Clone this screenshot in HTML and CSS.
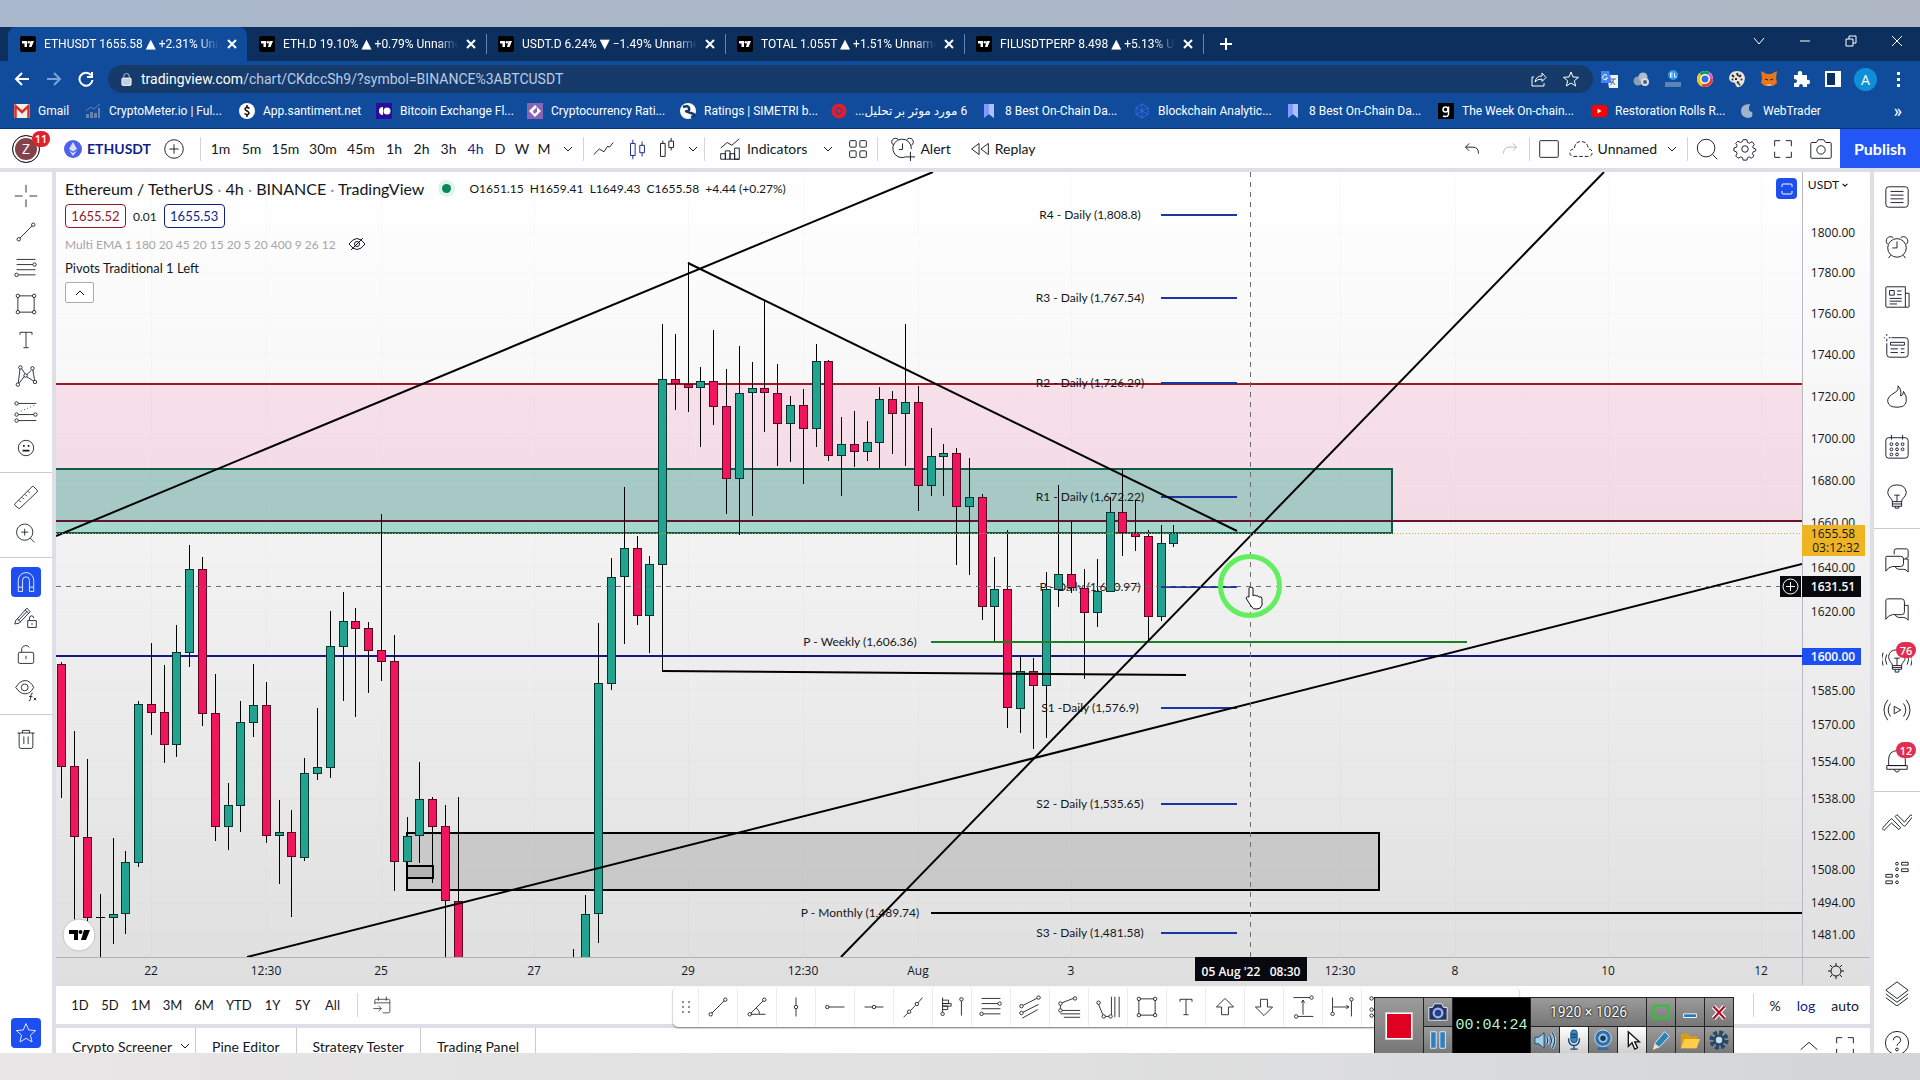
FILE: index.html
```html
<!DOCTYPE html>
<html lang="en">
<head>
    <meta charset="UTF-8">
    <meta name="viewport" content="width=device-width, initial-scale=1.0">
    <title>ETHUSDT 1655.58 ▲ +2.31% Unnamed</title>
    <link rel="stylesheet" href="styles.css">
</head>
<body>
    <svg class="defs" aria-hidden="true">
        <symbol id="tv" viewBox="0 0 16 16"><rect width="16" height="16" rx="2" fill="#000"/><path d="M2 5h5v6H4.500V7.500H2zM10.500 5H14l-2.500 6H9z" fill="#fff"/><circle cx="8.800" cy="6.200" r="1.200" fill="#fff"/></symbol>
        <symbol id="x" viewBox="0 0 10 10"><path d="M1 1l8 8M9 1L1 9"/></symbol>
        <symbol id="chev" viewBox="0 0 10 10"><path d="M1 3l4 4 4-4"/></symbol>
        <symbol id="chevup" viewBox="0 0 10 10"><path d="M1 7l4-4 4 4"/></symbol>
        <symbol id="plus" viewBox="0 0 28 28"><circle cx="14" cy="14" r="10"/><path d="M14 9v10M9 14h10"/></symbol>
        <symbol id="cross" viewBox="0 0 28 28"><path d="M14 1v9M14 18v9M1 14h9M18 14h9"/></symbol>
        <symbol id="trend" viewBox="0 0 28 28"><path d="M7 21L21 7"/><circle cx="5.500" cy="22.500" r="2"/><circle cx="22.500" cy="5.500" r="2"/></symbol>
        <symbol id="fib" viewBox="0 0 28 28"><path d="M3 4h22M3 10h19M3 16h22M5 22h20"/><circle cx="24" cy="10" r="2"/><circle cx="3" cy="22" r="2"/></symbol>
        <symbol id="rect" viewBox="0 0 28 28"><path d="M6 4.500h16M6 23.500h16M4.500 6v16M23.500 6v16"/><circle cx="4.500" cy="4.500" r="2"/><circle cx="23.500" cy="4.500" r="2"/><circle cx="4.500" cy="23.500" r="2"/><circle cx="23.500" cy="23.500" r="2"/></symbol>
        <symbol id="tee" viewBox="0 0 28 28"><path d="M7 8V5h14v3M14 5v18M11 23h6"/></symbol>
        <symbol id="pattern" viewBox="0 0 28 28"><path d="M5 22L7 6M9 5.500l4 6M15 12.500l5-5M22 7l2 12M6 22.500l6-8M15 15l8 5"/><circle cx="7.500" cy="4" r="2"/><circle cx="21.500" cy="5" r="2"/><circle cx="13.500" cy="13.500" r="2"/><circle cx="4.500" cy="24" r="2"/><circle cx="24.500" cy="21" r="2"/></symbol>
        <symbol id="predict" viewBox="0 0 28 28"><path d="M5 4h21M5 17h18M5 24h21"/><path d="M8 13L24 6" stroke-dasharray="1 3"/><circle cx="3" cy="4" r="2"/><circle cx="3" cy="17" r="2"/><circle cx="25" cy="17" r="2"/><circle cx="3" cy="24" r="2"/></symbol>
        <symbol id="smile" viewBox="0 0 28 28"><circle cx="14" cy="14" r="9"/><path d="M10 17h8M10.500 11.500h2M16 11.500h2" stroke-width="2"/></symbol>
        <symbol id="ruler" viewBox="0 0 28 28"><path d="M1 22L21 2q1-1 2 0l4 4q1 1 0 2L7 27q-1 1-2 0l-4-3.500q-.7-.8 0-1.500zM6 18l2 2M9.500 14.500l2 2M13 11l2 2M16.500 7.500l2 2"/></symbol>
        <symbol id="zoomin" viewBox="0 0 28 28"><circle cx="12.500" cy="13" r="9.500"/><path d="M12.500 9v8M8.500 13h8M19 20l5 5"/></symbol>
        <symbol id="magnet" viewBox="0 0 28 28"><path d="M5 25V12a9 9 0 0 1 18 0v13h-5V12a4 4 0 0 0-8 0v13zM5 20h5M18 20h5"/></symbol>
        <symbol id="pencillock" viewBox="0 0 28 28"><path d="M2 17L15 2.500l4 4L6 20l-5 1zM4 15l4 4M13 4.500l4 4M5 17L15.500 6M16 17h10v8H16zM18 17v-3a2.500 2.500 0 0 1 5 0M21 20v2"/></symbol>
        <symbol id="lock" viewBox="0 0 28 28"><rect x="5" y="12" width="18" height="13" rx="2"/><path d="M9 12V7.500a5 5 0 0 1 9-1M14 16v4"/></symbol>
        <symbol id="eye" viewBox="0 0 28 28"><path d="M2 11q5-8 11-8t10 8q-4 7.500-10 7.500T2 11z"/><circle cx="12.500" cy="11" r="4"/><path d="M22 18q-2-1-2.200 2l-.6 5q-.3 2-2 1.500M17.500 21.500h4M23 23l3 3M26 23l-3 3"/></symbol>
        <symbol id="trash" viewBox="0 0 28 28"><path d="M4 7h20M10 7V4h8v3M6 7v16q0 2 2 2h12q2 0 2-2V7M11.500 11v9M16.500 11v9"/></symbol>
        <symbol id="star" viewBox="0 0 28 28"><path d="M14 3l3.200 7.500 8 .700-6 5.300 1.800 8-7-4.300-7 4.300 1.800-8-6-5.300 8-.7z"/></symbol>
        <symbol id="line" viewBox="0 0 28 28"><path d="M4 20l6-6 5 3 4-6 2 1 4-5"/></symbol>
        <symbol id="candles" viewBox="0 0 28 28"><path d="M7 8h5v13H7zM9.500 4v4M9.500 21v4M17 10h5v8h-5zM19.500 6v4M19.500 18v4"/></symbol>
        <symbol id="candles2" viewBox="0 0 28 28"><path d="M7 8h5v14H7zM9.500 5v3M16 5.500h5v7h-5zM18.500 2v3.500M18.500 12.500v3"/></symbol>
        <symbol id="indic" viewBox="0 0 28 28"><path d="M4 13l7-6 5 3 8-7M4 25v-6h5v6M9 25v-9h5v9M14 25v-6h5v6M19 25V13h5v12zM4 25h20"/></symbol>
        <symbol id="grid" viewBox="0 0 28 28"><rect x="5" y="5" width="7" height="7" rx="1"/><rect x="16" y="5" width="7" height="7" rx="1"/><rect x="5" y="16" width="7" height="7" rx="1"/><rect x="16" y="16" width="7" height="7" rx="1"/></symbol>
        <symbol id="alarm" viewBox="0 0 28 28"><circle cx="14" cy="15" r="10"/><path d="M14 8v7H9M4 11a4.500 4.500 0 1 1 6-7M24 11a4.500 4.500 0 1 0-6-7M7 23l-2 3M21 23l2 3"/></symbol>
        <symbol id="alarmadd" viewBox="0 0 28 28"><path d="M17 22.500a10 10 0 1 1 6-8.500M13.500 8v6.500H9.500M4 10a4 4 0 1 1 5-6M23 10a4 4 0 1 0-5-6M22 17v10M17 22.500h10"/></symbol>
        <symbol id="replay" viewBox="0 0 28 28"><path d="M13 8v12l-8-6zM23 8v12l-8-6z"/></symbol>
        <symbol id="undo" viewBox="0 0 28 28"><path d="M11 8l-4 4 4 4M7 12h8q6 0 6 7"/></symbol>
        <symbol id="redo" viewBox="0 0 28 28"><path d="M17 8l4 4-4 4M21 12h-8q-6 0-6 7"/></symbol>
        <symbol id="square" viewBox="0 0 28 28"><rect x="4" y="5" width="20" height="18" rx="1"/></symbol>
        <symbol id="cloud" viewBox="0 0 28 28"><path d="M6 22h16q4 0 4-4t-4-4q-1-8-8-8t-7 8q-5 0-5 4t4 4z" stroke-dasharray="4 2"/></symbol>
        <symbol id="search" viewBox="0 0 28 28"><circle cx="13" cy="13" r="9.500"/><path d="M20 20l5 5"/></symbol>
        <symbol id="gear" viewBox="0 0 28 28"><circle cx="14" cy="14" r="3.500"/><path d="M12 4h4l.7 3 2 .8L21.500 6 24 9l-1.700 2.500.5 1.500 2.700 1v2l-2.700 1-.8 2 1.500 2.500-2.500 2.500-2.500-1.500-1.800.8-.7 2.700h-4l-.7-2.700-2-.8L6.500 24 4 21.500 5.500 19l-.8-2-2.700-1v-3l2.700-.8.8-2L4 8l2.500-2.500L9 7l2-.8z"/></symbol>
        <symbol id="full" viewBox="0 0 28 28"><path d="M5 11V5h6M17 5h6v6M23 17v6h-6M11 23H5v-6"/></symbol>
        <symbol id="camera" viewBox="0 0 28 28"><path d="M3 8q0-1 1-1h5l2-3h6l2 3h5q1 0 1 1v15q0 1-1 1H4q-1 0-1-1z"/><circle cx="14" cy="15" r="4.500"/></symbol>
        <symbol id="list" viewBox="0 0 28 28"><rect x="2" y="3" width="24" height="22" rx="3"/><path d="M7 8h14M7 12h14M7 16h14M7 20h14"/></symbol>
        <symbol id="news" viewBox="0 0 28 28"><path d="M2 4q0-1 1-1h20v22H3q-1 0-1-1zM23 10h4v14q0 1-1 1h-3M6 7h5v5H6zM14 7.500h5M14 11.500h5M6 15.500h13M6 18.500h13M6 21.500h8"/></symbol>
        <symbol id="notes" viewBox="0 0 28 28"><path d="M8 4h15q3 0 3 3v15q0 3-3 3H6q-3 0-3-3V10M3-2v4M3 5v3M-3 4h4M5 4h2M7 9h15v3H7zM7 16h8M18 16h4M7 20h8M18 20h4"/></symbol>
        <symbol id="fire" viewBox="0 0 28 28"><path d="M15 2q1 5-3 7-9 5-8 10 1 6 10 6t10-6-3-11q0 4-3 5 1-8-3-11z"/></symbol>
        <symbol id="calendar" viewBox="0 0 28 28"><rect x="2" y="4" width="24" height="22" rx="3"/><path d="M8 1v5M20 1v5"/><circle cx="8" cy="11" r="1.500"/><circle cx="14" cy="11" r="1.500"/><circle cx="20" cy="11" r="1.500"/><circle cx="8" cy="16.500" r="1.500"/><circle cx="14" cy="16.500" r="1.500"/><circle cx="20" cy="16.500" r="1.500"/><circle cx="8" cy="22" r="1.500"/><circle cx="14" cy="22" r="1.500"/></symbol>
        <symbol id="bulb" viewBox="0 0 28 28"><path d="M9 19q0-2-2-4-3-3-3-6 1-8 10-8t10 8q0 3-3 6-2 2-2 4zM9 19v5h10v-5M9 21.500h10M12 24v2h4v-2M11 12h6M14 12v7"/></symbol>
        <symbol id="chats" viewBox="0 0 28 28"><path d="M11 8V4q0-2 2-2h11q2 0 2 2v7q0 1-3 1M3 10h15q3 0 3 3v5q0 3-3 3H9q-5 1-7 5V11q0-1 1-1zM12 21q1 3 4 3h5q3 0 5 3V13h-5"/></symbol>
        <symbol id="chat" viewBox="0 0 28 28"><path d="M4 2h15q3 0 3 3v11q0 3-3 3H9q-5 1-7 5V4q0-2 2-2zM12 19q1 3 4 3h5q3 0 5 3V9h-4"/></symbol>
        <symbol id="cast" viewBox="0 0 32 28"><path d="M13 10v8l7-4zM9 7q-5 7 0 14M6 3q-8 11 0 22M23 7q5 7 0 14M26 3q8 11 0 22"/></symbol>
        <symbol id="ideas" viewBox="0 0 32 28"><path d="M11 20q0-2-2-4-2-2-2-6 1-7 9-7t9 7q0 4-2 6-2 2-2 4zM11 20v4h10v-4M11 22h10M14 24v3h4v-3M13 12h6M16 12v8M5 8q-3 5 0 11M1 6q-3 7 0 14M27 8q3 5 0 11M31 6q3 7 0 14"/></symbol>
        <symbol id="bell" viewBox="0 0 28 28"><path d="M5 20v-6q0-10 9-10t9 10v6zM3 20h22v4H3zM11 24q1 3 3 3t3-3"/></symbol>
        <symbol id="waves" viewBox="0 0 32 28"><path d="M0 20l9-10q1-1 2 0l9 9-2 2-8-7-8 8zM14 7l2-2 8 8 7-8 2 2-8 10q-1 1-2 0z"/></symbol>
        <symbol id="dom" viewBox="0 0 28 28"><circle cx="14" cy="4" r="1.500"/><circle cx="14" cy="10" r="1.500"/><circle cx="14" cy="17" r="1.500"/><circle cx="14" cy="24" r="1.500"/><path d="M19 2.500h7v3h-7zM19 9.500h7v3h-7zM2 15.500h7v3H2zM2 22.500h7v3H2z"/></symbol>
        <symbol id="layers" viewBox="0 0 28 28"><path d="M14 2l12 9-12 9-12-9zM2 15l12 9 12-9M2 19l12 9 12-9"/></symbol>
        <symbol id="help" viewBox="0 0 28 28"><circle cx="14" cy="14" r="12.500"/><path d="M10 11q0-4 4-4t4 4q0 2-2 3t-2 3"/><circle cx="14" cy="21" r="1.500"/></symbol>
        <symbol id="angle" viewBox="0 0 28 28"><path d="M7 21L21 7M7 22.500h17M13 15q4 3 4 7"/><circle cx="5.500" cy="22.500" r="2"/><circle cx="22.500" cy="5.500" r="2"/></symbol>
        <symbol id="vline" viewBox="0 0 28 28"><path d="M14 3v9M14 16v9"/><circle cx="14" cy="14" r="2"/></symbol>
        <symbol id="ray" viewBox="0 0 28 28"><path d="M7 14h18"/><circle cx="5" cy="14" r="2"/></symbol>
        <symbol id="hline" viewBox="0 0 28 28"><path d="M3 14h9M16 14h9"/><circle cx="14" cy="14" r="2"/></symbol>
        <symbol id="ext" viewBox="0 0 28 28"><path d="M3 26l5-5M11 18l6-6M20 9l5-6"/><circle cx="9.500" cy="19.500" r="2"/><circle cx="18.500" cy="10.500" r="2"/></symbol>
        <symbol id="profile" viewBox="0 0 28 28"><path d="M3 3v17M3 6h7v4H3M3 10h10v3H3M3 13h6v4H3M25 7v17"/><circle cx="3" cy="22" r="2"/><circle cx="25" cy="5" r="2"/></symbol>
        <symbol id="channel" viewBox="0 0 28 28"><path d="M6 12L22 4M6 20l18-9M5 27l18-10"/><circle cx="4" cy="13" r="2"/><circle cx="4" cy="21" r="2"/><circle cx="24" cy="3" r="2"/></symbol>
        <symbol id="pitch" viewBox="0 0 28 28"><path d="M6 9l13-5M4 12v4M6 18h21M4 22h23M8 26h19"/><circle cx="4" cy="10" r="2"/><circle cx="4" cy="18" r="2"/><circle cx="21" cy="4" r="2"/></symbol>
        <symbol id="fibtime" viewBox="0 0 28 28"><path d="M3 11l5 12M11 25h4M18 23V2M22 26V2M27 26V2"/><circle cx="3" cy="9" r="2"/><circle cx="9" cy="25" r="2"/><circle cx="17" cy="25" r="2"/></symbol>
        <symbol id="up" viewBox="0 0 28 28"><path d="M14 4l10 10h-6v9h-8v-9H4z"/></symbol>
        <symbol id="down" viewBox="0 0 28 28"><path d="M14 24l10-10h-6V5h-8v9H4z"/></symbol>
        <symbol id="prange" viewBox="0 0 28 28"><path d="M3 3h19M8 25h18M14 23V6M12 9l2-3 2 3"/><circle cx="24" cy="3" r="2"/><circle cx="6" cy="25" r="2"/></symbol>
        <symbol id="drange" viewBox="0 0 28 28"><path d="M3 3v17M25 7v18M4 14h18M19 12l3 2-3 2"/><circle cx="3" cy="22" r="2"/><circle cx="25" cy="5" r="2"/></symbol>
        <symbol id="goto" viewBox="0 0 28 28"><path d="M4 13V8q0-2 2-2h17q2 0 2 2v15q0 2-2 2h-8M4 11h21M9 2v6M20 2v6M2 19h11M9 15l4 4-4 4"/></symbol>
        <symbol id="mark" viewBox="0 0 16 16"><path d="M3 1h10v14l-5-4-5 4z" fill="#7f9bff"/><path d="M8 1h5v14l-5-4z" fill="#b0bfff"/></symbol>
    </svg>

    <div class="browser">
        <div class="tabs">
            <div class="tab active"><svg class="fav"><use href="#tv"/></svg><span>ETHUSDT 1655.58 <b>▲</b> +2.31% Unnamed</span><button aria-label="Close tab"><svg><use href="#x"/></svg></button></div>
            <div class="tab"><svg class="fav"><use href="#tv"/></svg><span>ETH.D 19.10% <b>▲</b> +0.79% Unnamed</span><button aria-label="Close tab"><svg><use href="#x"/></svg></button></div>
            <div class="tab"><svg class="fav"><use href="#tv"/></svg><span>USDT.D 6.24% <b>▼</b> −1.49% Unnamed</span><button aria-label="Close tab"><svg><use href="#x"/></svg></button></div>
            <div class="tab"><svg class="fav"><use href="#tv"/></svg><span>TOTAL 1.055T <b>▲</b> +1.51% Unnamed</span><button aria-label="Close tab"><svg><use href="#x"/></svg></button></div>
            <div class="tab"><svg class="fav"><use href="#tv"/></svg><span>FILUSDTPERP 8.498 <b>▲</b> +5.13% Unnamed</span><button aria-label="Close tab"><svg><use href="#x"/></svg></button></div>
            <button class="new-tab" aria-label="New tab"><svg viewBox="0 0 12 12"><path d="M6 0v12M0 6h12"/></svg></button>
            <div class="window-buttons">
                <button aria-label="Search tabs"><svg viewBox="0 0 12 12"><path d="M1 3l5 6 5-6"/></svg></button>
                <button aria-label="Minimize"><svg viewBox="0 0 12 12"><path d="M1 6h10"/></svg></button>
                <button aria-label="Restore"><svg viewBox="0 0 12 12"><path d="M1 4h7v7H1zM4 4V1h7v7H8"/></svg></button>
                <button aria-label="Close"><svg viewBox="0 0 12 12"><path d="M1 1l10 10M11 1L1 11"/></svg></button>
            </div>
        </div>

        <div class="address-bar">
            <button aria-label="Back"><svg viewBox="0 0 16 16"><path d="M15 8H2M8 2L2 8l6 6"/></svg></button>
            <button class="dim" aria-label="Forward"><svg viewBox="0 0 16 16"><path d="M1 8h13M8 2l6 6-6 6"/></svg></button>
            <button aria-label="Reload"><svg viewBox="0 0 16 16"><path d="M13 4a6.500 6.500 0 1 0 1.500 5M14 1v5H9"/></svg></button>
            <div class="url">
                <svg class="padlock" viewBox="0 0 12 14"><rect x="1" y="6" width="10" height="8" rx="1" fill="#c4d0e2"/><path d="M3 6V4a3 3 0 0 1 6 0v2" stroke="#c4d0e2"/></svg>
                <a href="#chart"><b>tradingview.com</b>/chart/CKdccSh9/?symbol=BINANCE%3ABTCUSDT</a>
                <button aria-label="Share"><svg viewBox="0 0 16 16"><path d="M3 6H1v9h12v-3M4 11q1-6 7-6V2l4 4.500-4 4V8q-5 0-7 3z"/></svg></button>
                <button aria-label="Bookmark"><svg viewBox="0 0 16 16"><path d="M8 1l2 5 5.500.3-4.200 3.500 1.400 5.200L8 12l-4.700 3 1.400-5.200L.5 6.300 6 6z"/></svg></button>
            </div>
            <div class="extensions">
                <svg viewBox="0 0 18 18"><path d="M7 5h11v13H9z" fill="#eef2f8"/><path d="M1 1h8l3 12H1z" fill="#4285f4"/><path d="M7 5.500A2.500 2.500 0 1 0 7.500 8H5.500" stroke="#fff"/><path d="M11 9h5M13.500 9q0 4-3 6M12 11l3 4" stroke="#667"/></svg>
                <svg viewBox="0 0 18 18"><circle cx="6" cy="11" r="4.500" fill="#8f9db0"/><circle cx="11" cy="7" r="4.500" fill="#b3bdca"/><circle cx="13" cy="12" r="4" fill="#d8dde4"/><circle cx="13" cy="12" r="2" fill="#50617a"/></svg>
                <svg viewBox="0 0 18 18"><circle cx="9" cy="5" r="5" fill="#2a9af0"/><path d="M6.500 3v4M6.500 3h2M6.500 5h2M6.500 7h2M10.500 3v4h2" stroke="#fff"/><path d="M1 12h16v5H1z" fill="#5d83b8"/></svg>
                <svg viewBox="0 0 18 18"><circle cx="9" cy="9" r="8" fill="#fff"/><circle cx="9" cy="9" r="6.500" stroke="#db4437" stroke-width="3" stroke-dasharray="13 28"/><circle cx="9" cy="9" r="6.500" stroke="#f4c20d" stroke-width="3" stroke-dasharray="0 13 12 20"/><circle cx="9" cy="9" r="6.500" stroke="#0f9d58" stroke-width="3" stroke-dasharray="0 25 9 20"/><circle cx="9" cy="9" r="6.500" stroke="#d05fd8" stroke-width="3" stroke-dasharray="0 34 8"/><circle cx="9" cy="9" r="3.500" fill="#356bd6"/></svg>
                <svg viewBox="0 0 18 18"><path d="M9 1q7 0 8 7-1 8-6 9-3 1-4-4Q1 12 1 8q1-7 8-7z" fill="#e9e5dc"/><path d="M4 5l2 2M9 3l1 3M13 5l-2 2M8 8v2M4 9l1 1M13 9l1 1M9 12l2 1M11 15l1-1" stroke="#302a28" stroke-width="2"/></svg>
                <svg viewBox="0 0 18 18"><path d="M1 1l6 3h4l6-3-1 7 1 5-4 3H5l-4-3 1-5z" fill="#e8761b"/><path d="M5 9l3 1M13 9l-3 1" stroke="#222"/><path d="M7 14h4v2H7z" fill="#c9b9ad"/></svg>
                <svg viewBox="0 0 18 18"><path d="M2 5h4q-1-4 2-4t2 4h5v5q3-1 3 2t-3 2v3h-4q0-3-2-3t-2 3H2v-4q3 0 3-2t-3-2z" fill="#fff"/></svg>
                <svg viewBox="0 0 18 18"><path d="M2 2h14v14H2z" fill="#0b2f63" stroke="#fff" stroke-width="2"/><path d="M11 2h5v14h-5z" fill="#fff"/></svg>
                <button class="profile">A</button>
                <svg viewBox="0 0 18 18"><path d="M8 2h3v3H8zM8 8h3v3H8zM8 14h3v3H8z" fill="#fff"/></svg>
            </div>
        </div>

        <nav class="bookmarks">
            <a href="#gmail"><svg viewBox="0 0 16 16"><rect y="1" width="16" height="14" fill="#f3eeee"/><path d="M1.500 15V3L8 9l6.500-6v12" stroke="#d93025" stroke-width="2.500"/></svg>Gmail</a>
            <a href="#cryptometer"><svg viewBox="0 0 16 16"><path d="M1 15v-4h3v4M5 15V9h3v6M9 15v-5h3v5M13 15V5h2v10" fill="#6782a8"/><path d="M1 8l5-4 3 2 6-5" stroke="#6782a8"/></svg>CryptoMeter.io | Ful...</a>
            <a href="#santiment"><svg viewBox="0 0 16 16"><circle cx="8" cy="8" r="8" fill="#fff"/><path d="M10.500 5.500Q8 3.500 6.500 5t1.500 3 1.500 3-4-.5M8 2v2M8 12v2" stroke="#111" stroke-width="1.500"/></svg>App.santiment.net</a>
            <a href="#exchange"><svg viewBox="0 0 16 16"><rect width="16" height="16" fill="#2a0d9c"/><path d="M7 4a4 4 0 0 0 0 8z" fill="#fff"/><circle cx="11" cy="8" r="3.500" fill="#fff"/></svg>Bitcoin Exchange Fl...</a>
            <a href="#ratings"><svg viewBox="0 0 16 16"><rect width="16" height="16" fill="#8a64b4"/><path d="M2 8l6-6 6 6-6 6z" fill="#fff"/><path d="M6 8l4-4v5l-3 2z" fill="#8a64b4"/></svg>Cryptocurrency Rati...</a>
            <a href="#simetri"><svg viewBox="0 0 16 16"><circle cx="8" cy="8" r="8" fill="#fff"/><path d="M3 4q5-2 6 1t-2 3 4 2 0 4" stroke="#153869" stroke-width="2.500"/></svg>Ratings | SIMETRI b...</a>
            <a href="#fa"><svg viewBox="0 0 16 16"><circle cx="8" cy="8" r="7.500" fill="#df1f2d"/><path d="M5 8a3 3 0 0 1 6 0M11 8a3 3 0 0 1-6 0" stroke="#104c9b"/></svg><bdi dir="ltr">...</bdi><bdi dir="rtl">6 مورد موثر بر تحلیل</bdi></a>
            <a href="#onchain"><svg><use href="#mark"/></svg>8 Best On-Chain Da...</a>
            <a href="#blockchain"><svg viewBox="0 0 16 16"><path d="M8 1l6 3.500v7L8 15l-6-3.500v-7zM2 4.500l12 7M14 4.500l-12 7M8 1v14" stroke="#2c6ae0"/></svg>Blockchain Analytic...</a>
            <a href="#onchain2"><svg><use href="#mark"/></svg>8 Best On-Chain Da...</a>
            <a href="#week"><svg viewBox="0 0 16 16"><rect width="16" height="16" fill="#000"/><circle cx="7.500" cy="6.500" r="2.500" stroke="#fff" stroke-width="1.500"/><path d="M10.500 3.500v8q-1 3-5.500 1.500" stroke="#fff" stroke-width="1.500"/></svg>The Week On-chain...</a>
            <a href="#restoration"><svg viewBox="0 0 16 16"><rect y="2" width="16" height="12" rx="3" fill="#f00"/><path d="M6.500 5.500v5l4-2.500z" fill="#fff"/></svg>Restoration Rolls R...</a>
            <a href="#webtrader"><svg viewBox="0 0 16 16"><path d="M11 1Q2 1 2 8t8 7q5-1 3-6-5-1-2-8z" fill="#9db4cc"/></svg>WebTrader</a>
            <button class="more">»</button>
        </nav>

        <header class="header">
            <button class="avatar">Z<span class="badge">11</span></button>
            <button class="symbol"><svg viewBox="0 0 18 18"><circle cx="9" cy="9" r="9" fill="#4d62e8"/><path d="M9 2l4 7-4 2.500L5 9zM5 10.500L9 13l4-2.500L9 16z" fill="#d8defc"/></svg>ETHUSDT</button>
            <button class="tool w52"><svg class="ic"><use href="#plus"/></svg></button>
            <i class="sep"></i>
            <div class="intervals">
                <button>1m</button><button>5m</button><button>15m</button><button>30m</button><button>45m</button><button>1h</button><button>2h</button><button>3h</button><button class="on">4h</button><button>D</button><button>W</button><button>M</button>
                <button aria-label="More intervals"><svg class="chev"><use href="#chev"/></svg></button>
            </div>
            <i class="sep"></i>
            <button class="tool w38"><svg class="ic"><use href="#line"/></svg></button>
            <button class="tool w30 navy"><svg class="ic"><use href="#candles"/></svg></button>
            <button class="tool w30"><svg class="ic"><use href="#candles2"/></svg></button>
            <button class="tool w22"><svg class="chev"><use href="#chev"/></svg></button>
            <i class="sep"></i>
            <button class="tool indicators"><svg class="ic"><use href="#indic"/></svg>Indicators</button>
            <button class="tool w22"><svg class="chev"><use href="#chev"/></svg></button>
            <button class="tool w38"><svg class="ic"><use href="#grid"/></svg></button>
            <i class="sep"></i>
            <button class="tool alert"><svg class="ic"><use href="#alarmadd"/></svg>Alert</button>
            <button class="tool replay"><svg class="ic"><use href="#replay"/></svg>Replay</button>
            <div class="header-right">
                <button class="tool w38"><svg class="ic"><use href="#undo"/></svg></button>
                <button class="tool w38 faded"><svg class="ic"><use href="#redo"/></svg></button>
                <i class="sep"></i>
                <button class="tool w38"><svg class="ic"><use href="#square"/></svg></button>
                <button class="tool layout"><svg class="ic"><use href="#cloud"/></svg>Unnamed</button>
                <button class="tool w30"><svg class="chev"><use href="#chev"/></svg></button>
                <i class="sep"></i>
                <button class="tool w38"><svg class="ic"><use href="#search"/></svg></button>
                <button class="tool w38"><svg class="ic"><use href="#gear"/></svg></button>
                <button class="tool w38"><svg class="ic"><use href="#full"/></svg></button>
                <button class="tool w38"><svg class="ic"><use href="#camera"/></svg></button>
                <button class="publish">Publish</button>
            </div>
        </header>

        <main class="workspace">
            <aside class="left-bar">
                <button><svg class="ic"><use href="#cross"/></svg></button>
                <button><svg class="ic"><use href="#trend"/></svg></button>
                <button><svg class="ic"><use href="#fib"/></svg></button>
                <button><svg class="ic"><use href="#rect"/></svg></button>
                <button><svg class="ic"><use href="#tee"/></svg></button>
                <button><svg class="ic"><use href="#pattern"/></svg></button>
                <button><svg class="ic"><use href="#predict"/></svg></button>
                <button><svg class="ic"><use href="#smile"/></svg></button>
                <hr>
                <button><svg class="ic"><use href="#ruler"/></svg></button>
                <button><svg class="ic"><use href="#zoomin"/></svg></button>
                <hr>
                <button class="blue"><svg class="ic"><use href="#magnet"/></svg></button>
                <button><svg class="ic"><use href="#pencillock"/></svg></button>
                <button><svg class="ic"><use href="#lock"/></svg></button>
                <button><svg class="ic"><use href="#eye"/></svg></button>
                <hr>
                <button><svg class="ic"><use href="#trash"/></svg></button>
                <button class="blue favorites"><svg class="ic"><use href="#star"/></svg></button>
            </aside>

            <div class="center">
                <div class="chart">
                    <svg id="chart" viewBox="56 172 1814 814" preserveAspectRatio="xMidYMid slice"></svg>
                    <div class="legend">
                        <div class="title"><span>Ethereum / TetherUS <em>·</em> 4h <em>·</em> BINANCE <em>·</em> TradingView</span><i class="dot"></i><span class="ohlc">O1651.15&nbsp; H1659.41&nbsp; L1649.43&nbsp; C1655.58&nbsp; +4.44 (+0.27%)</span></div>
                        <div class="quotes"><button class="sell">1655.52</button><span>0.01</span><button class="buy">1655.53</button></div>
                        <div class="study muted">Multi EMA 1 180 20 45 20 15 20 5 20 400 9 26 12<svg viewBox="0 0 18 14"><path d="M1 7q4-5.500 8-5.500T17 7q-4 5.500-8 5.500T1 7z"/><circle cx="9" cy="7" r="2.500"/><path d="M3 13L15 1"/></svg></div>
                        <div class="study">Pivots Traditional 1 Left</div>
                        <button class="collapse" aria-label="Collapse"><svg class="chev"><use href="#chevup"/></svg></button>
                    </div>
                    <button class="snap" aria-label="Maximize chart"><svg viewBox="0 0 14 14"><path d="M2 5V3q0-1 1-1h8q1 0 1 1v2M2 9v2q0 1 1 1h8q1 0 1-1V9"/></svg></button>
                    <button class="currency">USDT<svg viewBox="0 0 10 10"><use href="#chev"/></svg></button>
                </div>
                <div class="ranges">
                    <button>1D</button><button>5D</button><button>1M</button><button>3M</button><button>6M</button><button>YTD</button><button>1Y</button><button>5Y</button><button>All</button>
                    <i class="sep"></i>
                    <button class="goto" aria-label="Go to date"><svg class="ic"><use href="#goto"/></svg></button>
                    <div class="scale"><i class="sep"></i><button>%</button><button class="on">log</button><button>auto</button></div>
                </div>
                <div class="panels">
                    <button>Crypto Screener<svg class="chev"><use href="#chev"/></svg></button>
                    <button>Pine Editor</button>
                    <button>Strategy Tester</button>
                    <button>Trading Panel</button>
                    <div class="panel-tools"><svg class="ic" viewBox="0 0 28 28"><path d="M5 18l9-8 9 8"/></svg><svg class="ic"><use href="#full"/></svg></div>
                </div>
            </div>

            <aside class="right-bar">
                <button><svg class="ic"><use href="#list"/></svg></button>
                <button><svg class="ic"><use href="#alarm"/></svg></button>
                <button><svg class="ic"><use href="#news"/></svg></button>
                <button><svg class="ic"><use href="#notes"/></svg></button>
                <button><svg class="ic"><use href="#fire"/></svg></button>
                <button><svg class="ic"><use href="#calendar"/></svg></button>
                <button><svg class="ic"><use href="#bulb"/></svg></button>
                <hr>
                <button><svg class="ic"><use href="#chats"/></svg></button>
                <button><svg class="ic"><use href="#chat"/></svg></button>
                <button><svg class="ic wide"><use href="#ideas"/></svg><span class="badge">76</span></button>
                <button><svg class="ic wide"><use href="#cast"/></svg></button>
                <button><svg class="ic"><use href="#bell"/></svg><span class="badge">12</span></button>
                <hr>
                <button><svg class="ic wide"><use href="#waves"/></svg></button>
                <button><svg class="ic"><use href="#dom"/></svg></button>
                <button class="push"><svg class="ic"><use href="#layers"/></svg></button>
                <button><svg class="ic"><use href="#help"/></svg></button>
            </aside>
        </main>

        <div class="draw-bar">
            <svg class="grip" viewBox="0 0 10 14"><path d="M1 1h2v2H1zM7 1h2v2H7zM1 6h2v2H1zM7 6h2v2H7zM1 11h2v2H1zM7 11h2v2H7z"/></svg>
            <button><svg class="ic"><use href="#trend"/></svg></button>
            <button><svg class="ic"><use href="#angle"/></svg></button>
            <button><svg class="ic"><use href="#vline"/></svg></button>
            <button><svg class="ic"><use href="#ray"/></svg></button>
            <button><svg class="ic"><use href="#hline"/></svg></button>
            <button><svg class="ic"><use href="#ext"/></svg></button>
            <button><svg class="ic"><use href="#profile"/></svg></button>
            <button><svg class="ic"><use href="#fib"/></svg></button>
            <button><svg class="ic"><use href="#channel"/></svg></button>
            <button><svg class="ic"><use href="#pitch"/></svg></button>
            <button><svg class="ic"><use href="#fibtime"/></svg></button>
            <button><svg class="ic"><use href="#rect"/></svg></button>
            <button><svg class="ic"><use href="#tee"/></svg></button>
            <button><svg class="ic"><use href="#up"/></svg></button>
            <button><svg class="ic"><use href="#down"/></svg></button>
            <button><svg class="ic"><use href="#prange"/></svg></button>
            <button><svg class="ic"><use href="#drange"/></svg></button>
            <button><svg class="ic"><use href="#predict"/></svg></button>
        </div>

        <div class="recorder">
            <button class="rec" aria-label="Stop"><i></i></button>
            <button aria-label="Snapshot"><svg viewBox="0 0 24 24"><path d="M2 7h4l2-4h8l2 4h4v14H2z" fill="#233463" stroke="#eef"/><circle cx="12" cy="13" r="6" fill="#9db4e8"/><circle cx="12" cy="13" r="3.500" fill="#24408c"/></svg></button>
            <output class="timer">00:04:24</output>
            <span class="dims">1920 × 1026</span>
            <button aria-label="Region"><svg viewBox="0 0 24 24"><path d="M4 5h16v14H4z" stroke="#33c133" stroke-width="2.500"/></svg></button>
            <button aria-label="Minimize recorder"><svg viewBox="0 0 24 24"><path d="M5 14h14v4H5z" fill="#2878b8" stroke="#fff"/></svg></button>
            <button aria-label="Close recorder"><svg viewBox="0 0 24 24"><path d="M6 6l12 13M18 6L6 19" stroke="#fff" stroke-width="5"/><path d="M6 6l12 13M18 6L6 19" stroke="#b3122c" stroke-width="2.500"/></svg></button>
            <button aria-label="Pause"><svg viewBox="0 0 24 24"><path d="M4 3h6v18H4zM14 3h6v18h-6z" fill="#2f7fc0" stroke="#e4f0fa"/></svg></button>
            <button aria-label="Sound"><svg viewBox="0 0 24 24"><path d="M1 9h4l6-5v17l-6-5H1z" fill="#9fcdec" stroke="#134a78"/><path d="M14 9q2 4 0 7M17 7q4 6 0 11M20 4q5 8 0 17" stroke="#d8ecf8" stroke-width="3"/><path d="M14 9q2 4 0 7M17 7q4 6 0 11M20 4q5 8 0 17" stroke="#134a78" stroke-width="1.500"/></svg></button>
            <button class="lit" aria-label="Microphone"><svg viewBox="0 0 24 24"><rect x="8.500" y="1" width="7" height="14" rx="3.500" fill="#3f86c0" stroke="#134a78"/><path d="M6 10q0 8 6 8t6-8M12 18v4M8 22h8M9 6h6M9 9h6" stroke="#134a78" stroke-width="1.500"/></svg></button>
            <button aria-label="Webcam"><svg viewBox="0 0 24 24"><circle cx="12" cy="10" r="9" fill="#2f6ea6" stroke="#d3e4f2"/><circle cx="12" cy="10" r="5" fill="#9ec7e6"/><circle cx="12" cy="10" r="3" fill="#173a5c"/><path d="M6 20h12v3H6z" fill="#2f6ea6"/></svg></button>
            <button class="lit" aria-label="Cursor"><svg viewBox="0 0 24 24"><path d="M8 3v16l4-4 3 7 3-1.500-3-6.500h5z" fill="#fff" stroke="#111" stroke-width="1.500"/></svg></button>
            <button aria-label="Draw"><svg viewBox="0 0 24 24"><path d="M5 16L16 3l5 5L10 20z" fill="#2b83b8" stroke="#e6f2fa"/><path d="M5 16l5 4-7 3z" fill="#f3e0b8"/></svg></button>
            <button aria-label="Folder"><svg viewBox="0 0 24 24"><path d="M2 5h8l2 3h8v13H2z" fill="#d99a17"/><path d="M6 11h17l-4 10H2z" fill="#ffcf4a"/></svg></button>
            <button aria-label="Settings"><svg viewBox="0 0 24 24"><circle cx="12" cy="12" r="8" stroke="#24496a" stroke-width="5" stroke-dasharray="4 2.280"/><circle cx="12" cy="12" r="6" fill="#24496a"/><circle cx="12" cy="12" r="3.500" fill="#cfdbe6"/></svg></button>
        </div>
    </div>

    <script src="chart.js"></script>
</body>
</html>
```
FILE: styles.css
```css
* {
    box-sizing: border-box;
}
body {
    margin: 0;
    height: 100vh;
    padding: 27px 0;
    overflow: hidden;
    background: linear-gradient(90deg, #a9b7cc, #afb7c4) top / 100% 50% no-repeat, linear-gradient(90deg, #e8e6e7, #e1e1e1 50%, #d4d5d8);
    font-family: "Open Sans", "Noto Sans", sans-serif;
    font-size: 14px;
    color: #131722;
}
button {
    margin: 0;
    padding: 0;
    border: 0;
    background: none;
    font: inherit;
    color: inherit;
    display: flex;
    align-items: center;
    justify-content: center;
    flex-shrink: 0;
}
a {
    color: inherit;
    text-decoration: none;
}
svg {
    fill: none;
    stroke: currentColor;
    flex-shrink: 0;
}
use {
    stroke: inherit;
}
.defs {
    display: none;
}
.ic {
    width: 28px;
    height: 28px;
    overflow: visible;
}
.ic.wide {
    width: 32px;
}
.chev {
    width: 10px;
    height: 10px;
}
.browser {
    position: relative;
    height: 100%;
    display: flex;
    flex-direction: column;
    overflow: hidden;
}

/* browser window */
.tabs {
    display: flex;
    height: 34px;
    flex-shrink: 0;
    padding-left: 8px;
    background: #0d2f5e;
    color: #fff;
    font-family: Roboto, sans-serif;
    font-size: 12px;
}
.tab {
    display: flex;
    align-items: center;
    width: 239px;
    padding: 0 10px 0 12px;
    gap: 8px;
}
.tab.active {
    background: #104c9b;
    border-radius: 8px 8px 0 0;
}
.tab + .tab + .tab,
.new-tab {
    background: linear-gradient(#5b86c0, #5b86c0) left center / 1px 20px no-repeat;
}
.tab .fav {
    width: 16px;
    height: 16px;
    stroke: none;
}
.tab span {
    flex: 1;
    overflow: hidden;
    white-space: nowrap;
    -webkit-mask: linear-gradient(90deg, #000 88%, transparent);
    mask: linear-gradient(90deg, #000 88%, transparent);
}
.tab b {
    font-family: "DejaVu Sans", sans-serif;
    font-size: 13px;
    font-weight: 400;
    line-height: 12px;
}
.tab button svg {
    width: 10px;
    height: 10px;
    stroke-width: 2px;
}
.new-tab {
    width: 46px;
}
.new-tab svg {
    width: 12px;
    height: 12px;
    stroke-width: 2px;
}
.window-buttons {
    display: flex;
    margin-left: auto;
}
.window-buttons button {
    width: 46px;
    height: 28px;
}
.window-buttons svg {
    width: 12px;
    height: 12px;
}
.address-bar {
    display: flex;
    align-items: center;
    height: 36px;
    flex-shrink: 0;
    padding: 0 6px;
    background: #104c9b;
    color: #fff;
}
.address-bar button {
    width: 32px;
    height: 28px;
}
.address-bar button svg {
    width: 16px;
    height: 16px;
    stroke-width: 2px;
}
.address-bar .dim {
    color: #7ba2d8;
}
.url {
    flex: 1;
    display: flex;
    align-items: center;
    height: 28px;
    margin-left: 6px;
    padding: 0 6px 0 13px;
    border-radius: 14px;
    background: #163b6b;
    font-family: Roboto, sans-serif;
    font-size: 14px;
}
.url a {
    flex: 1;
    margin-left: 9px;
    color: #b9cce8;
}
.url b {
    font-weight: 400;
    color: #fff;
}
.url .padlock {
    width: 11px;
    height: 14px;
}
.url button svg {
    stroke-width: 1px;
}
.extensions {
    display: flex;
    align-items: center;
}
.extensions svg {
    width: 18px;
    height: 18px;
    margin: 0 7px;
    stroke: none;
}
.extensions .profile {
    width: 23px;
    height: 23px;
    margin: 0 5px;
    border-radius: 50%;
    background: #0f8fd8;
}
.bookmarks {
    display: grid;
    grid-template-columns: 71px 154px 137px 151px 153px 151px 150px 153px 151px 153px 153px 148px 80px 1fr;
    align-items: center;
    height: 32px;
    flex-shrink: 0;
    padding: 0 18px 4px 14px;
    background: #104c9b;
    border-bottom: 1px solid #0a3575;
    color: #fff;
    font-family: Roboto, "Noto Sans", "DejaVu Sans", sans-serif;
    font-size: 12px;
    white-space: nowrap;
}
.bookmarks a {
    display: flex;
    align-items: center;
}
.bookmarks svg {
    width: 16px;
    height: 16px;
    margin-right: 8px;
    stroke: none;
}
.bookmarks .more {
    justify-self: end;
    height: 20px;
    font-size: 18px;
}

/* top toolbar */
.header {
    display: flex;
    align-items: center;
    height: 39px;
    flex-shrink: 0;
    background: #fff;
}
.sep {
    width: 1px;
    height: 24px;
    background: #d5d5dc;
    flex-shrink: 0;
}
.badge {
    position: absolute;
    display: flex;
    align-items: center;
    justify-content: center;
    min-width: 18px;
    height: 16px;
    border-radius: 8px;
    background: #e2202c;
    color: #fff;
    font-size: 11px;
    font-weight: 600;
}
.avatar {
    position: relative;
    width: 28px;
    height: 28px;
    margin-left: 12px;
    border: 1px solid #131722;
    border-radius: 50%;
    background: #84434b;
    box-shadow: inset 0 0 0 2px #fff;
    color: #fff;
}
.avatar .badge {
    top: -5px;
    right: -11px;
}
.symbol {
    justify-content: flex-start;
    width: 108px;
    padding-left: 24px;
    gap: 5px;
    color: #101f8c;
    font-family: Lato, sans-serif;
    font-weight: 700;
}
.symbol svg {
    width: 18px;
    height: 20px;
    stroke: none;
}
.tool {
    height: 38px;
    gap: 4px;
    font-family: Lato, sans-serif;
}
.tool .ic {
    width: 26px;
    height: 26px;
}
.w22 { width: 22px; }
.w30 { width: 30px; }
.w38 { width: 38px; }
.w52 { width: 52px; }
.navy {
    color: #101f8c;
}
.faded {
    color: #b2b5be;
}
.intervals {
    display: grid;
    grid-template-columns: 31px 31px 37px 38px 38px 28px 27px 27px 27px 22px 22px 22px 26px;
    padding: 0 2px 0 4px;
    font-family: Lato, sans-serif;
}
.on {
    color: #101f8c;
}
.indicators {
    padding-left: 12px;
}
.indicators + .tool {
    margin-left: 10px;
}
.alert {
    padding-left: 12px;
}
.replay {
    padding-left: 16px;
    gap: 2px;
}
.header-right {
    display: flex;
    align-items: center;
    margin-left: auto;
}
.header-right .publish {
    width: 80px;
    height: 39px;
    background: #2257f5;
    color: #fff;
    font-family: Lato, sans-serif;
    font-size: 16px;
    font-weight: 700;
}

/* workspace */
.workspace {
    display: flex;
    flex: 1;
    min-height: 0;
    gap: 4px;
    padding-top: 4px;
    background: #dedfe6;
}
.left-bar {
    display: flex;
    flex-direction: column;
    align-items: center;
    width: 52px;
    padding: 6px 0 5px;
    background: #fff;
}
.left-bar button {
    width: 36px;
    height: 36px;
}
.left-bar .ic {
    width: 24px;
    height: 24px;
}
.left-bar hr,
.right-bar hr {
    width: 100%;
    height: 1px;
    flex-shrink: 0;
    margin: 6px 0;
    border: 0;
    background: #c9cad2;
}
.left-bar .blue {
    width: 30px;
    height: 30px;
    margin: 3px 0;
    border-radius: 4px;
    background: #1d4ff0;
    color: #fff;
}
.left-bar .favorites {
    margin: auto 0 0;
}
.center {
    flex: 1;
    min-width: 0;
    display: flex;
    flex-direction: column;
}
.right-bar {
    display: flex;
    flex-direction: column;
    width: 46px;
    background: #fff;
    overflow: hidden;
}
.right-bar button {
    position: relative;
    width: 46px;
    height: 50px;
}
.right-bar .ic {
    width: 26px;
    height: 26px;
}
.right-bar .wide {
    width: 30px;
}
.right-bar .badge {
    top: 7px;
    right: 4px;
    min-width: 20px;
    background: #e22e4e;
}
.right-bar .push {
    margin-top: 70px;
}
.chart {
    position: relative;
    flex: 1;
    min-height: 0;
    background: linear-gradient(#fff, #f1f1f1 50%, #dfdfe0);
}
#chart {
    display: block;
    width: 100%;
    height: 100%;
    stroke: none;
}
#chart text {
    font-family: "Open Sans", sans-serif;
    font-size: 12px;
    fill: #131722;
    text-anchor: middle;
    dominant-baseline: central;
}
#chart .pivot {
    font-family: Lato, sans-serif;
}
#chart .light {
    fill: #fff;
    font-weight: 600;
}
#chart .trend line {
    stroke: #000;
    stroke-width: 2px;
}
.legend {
    position: absolute;
    top: 4px;
    left: 9px;
    display: flex;
    flex-direction: column;
    align-items: flex-start;
    font-family: Lato, sans-serif;
}
.title {
    display: flex;
    align-items: center;
    height: 24px;
    font-size: 16px;
}
.title em {
    font-style: normal;
    color: #8a8d98;
}
.dot {
    width: 9px;
    height: 9px;
    margin: 0 18px;
    border-radius: 50%;
    background: #0b8560;
    box-shadow: 0 0 0 4px #dff3ee;
}
.ohlc {
    font-size: 12px;
}
.quotes {
    display: flex;
    align-items: center;
    height: 32px;
    gap: 7px;
    font-size: 12px;
}
.quotes button {
    width: 61px;
    height: 24px;
    border: 1px solid #8f1a28;
    border-radius: 4px;
    background: #fff;
    color: #8f1a28;
    font-size: 13px;
}
.quotes .buy {
    border-color: #101f8c;
    color: #101f8c;
}
.study {
    display: flex;
    align-items: center;
    gap: 12px;
    height: 24px;
    font-size: 13px;
}
.study svg {
    width: 18px;
    height: 14px;
    color: #131722;
}
.muted {
    color: #a4a5aa;
    font-size: 12px;
}
.collapse {
    width: 29px;
    height: 21px;
    margin-top: 2px;
    border: 1px solid #a9aab2;
    border-radius: 2px;
    background: #fff;
}
.snap {
    position: absolute;
    top: 6px;
    right: 73px;
    width: 21px;
    height: 21px;
    border-radius: 4px;
    background: #1d4ff0;
    color: #fff;
}
.snap svg {
    width: 14px;
    height: 14px;
}
.currency {
    position: absolute;
    top: 5px;
    right: 22px;
    gap: 3px;
    font-size: 12px;
    font-family: Lato, sans-serif;
}
.currency svg {
    width: 6px;
    height: 6px;
    stroke-width: 2px;
}
.ranges {
    display: flex;
    align-items: center;
    height: 38px;
    flex-shrink: 0;
    padding: 0 9px;
    background: #fff;
    font-family: Lato, sans-serif;
    font-size: 13px;
}
.ranges > button {
    min-width: 30px;
    padding: 0 6px;
}
.ranges > .sep {
    margin-left: 9px;
}
.ranges .goto {
    margin-left: 8px;
}
.ranges .ic {
    width: 20px;
    height: 20px;
}
.scale {
    display: flex;
    align-items: center;
    gap: 16px;
    margin-left: auto;
    padding-right: 2px;
    font-size: 14px;
}
.panels {
    display: flex;
    height: 25px;
    flex-shrink: 0;
    margin-top: 4px;
    background: #fff;
    overflow: hidden;
    font-family: Lato, sans-serif;
}
.panels button {
    height: 36px;
    padding: 0 16px;
    gap: 8px;
    border-right: 1px solid #c9cad2;
}
.panels button:first-child {
    padding-right: 5px;
}
.panel-tools {
    display: flex;
    align-items: center;
    height: 36px;
    margin-left: auto;
    padding-right: 12px;
    gap: 10px;
}
.panel-tools .ic {
    width: 26px;
    height: 26px;
}

/* floating bars */
.draw-bar {
    position: absolute;
    left: 673px;
    bottom: 26px;
    display: flex;
    align-items: center;
    height: 40px;
    width: 846px;
    overflow: hidden;
    border-radius: 5px;
    background: #fff;
    box-shadow: 0 1px 2px #777;
}
.draw-bar .grip {
    width: 10px;
    height: 14px;
    margin: 0 7px 0 8px;
    fill: #8d8f96;
    stroke: none;
}
.draw-bar button {
    width: 39px;
    height: 38px;
    border-left: 1px solid #ececf0;
}
.draw-bar .ic {
    width: 24px;
    height: 24px;
}
.recorder {
    position: absolute;
    left: 1374px;
    bottom: 0;
    display: grid;
    grid-template-columns: 48px 28px 77px repeat(7, 28px);
    grid-template-rows: 28px 26px;
    gap: 1px;
    padding: 1px 1px 0;
    background: #222;
    font-family: Roboto, sans-serif;
}
.recorder button,
.dims {
    background: linear-gradient(#9b9b9b, #777);
}
.recorder svg {
    width: 22px;
    height: 22px;
    stroke: none;
}
.recorder .rec {
    grid-row: span 2;
}
.rec i {
    width: 26px;
    height: 26px;
    background: #e0001f;
    border: 1px solid #fff;
    outline: 1px solid #ccc;
}
.timer {
    grid-row: span 2;
    display: flex;
    align-items: center;
    justify-content: center;
    background: #000;
    color: #b8f5c0;
    font-family: "Liberation Mono", monospace;
    font-size: 15px;
}
.dims {
    grid-column: span 4;
    display: flex;
    align-items: center;
    justify-content: center;
    color: #fff;
    font-size: 14px;
    text-shadow: 0 0 2px #000, 0 0 2px #000;
}
.recorder .lit {
    background: linear-gradient(#fff, #cfcfcf);
}
```
FILE: chart.js
```js
// x, high, body top, body bottom, low, u = up / d = down
const candles = [
    [61, 662, 664, 767, 798, 'd'], [74, 731, 766, 837, 920, 'd'], [87, 759, 837, 918, 921, 'd'],
    [100, 894, 917, 917, 957, 'd'], [113, 838, 914, 918, 944, 'u'], [125, 851, 862, 914, 934, 'u'],
    [138, 701, 704, 863, 867, 'u'], [151, 643, 704, 713, 735, 'd'], [164, 665, 712, 745, 763, 'd'],
    [176, 625, 652, 745, 757, 'u'], [189, 545, 569, 653, 667, 'u'], [202, 557, 569, 714, 726, 'd'],
    [215, 674, 713, 827, 841, 'd'], [228, 783, 805, 827, 850, 'u'], [240, 701, 722, 806, 832, 'u'],
    [253, 664, 705, 723, 737, 'u'], [266, 682, 705, 836, 843, 'd'], [279, 800, 832, 836, 884, 'u'],
    [291, 810, 832, 857, 917, 'd'], [304, 758, 773, 858, 861, 'u'], [317, 708, 767, 774, 780, 'u'],
    [330, 611, 646, 768, 778, 'u'], [343, 592, 621, 647, 701, 'u'], [355, 608, 621, 629, 717, 'd'],
    [368, 622, 628, 651, 693, 'd'], [381, 514, 650, 662, 681, 'd'], [394, 635, 661, 862, 891, 'd'],
    [407, 817, 836, 862, 862, 'u'], [419, 762, 799, 836, 863, 'u'], [432, 797, 799, 827, 883, 'd'],
    [445, 805, 826, 901, 957, 'd'], [458, 797, 901, 958, 958, 'd'],
    [585, 895, 914, 958, 958, 'u'], [598, 623, 683, 914, 943, 'u'], [611, 558, 577, 684, 690, 'u'],
    [624, 487, 548, 577, 644, 'u'], [637, 536, 548, 616, 625, 'd'], [649, 556, 564, 616, 653, 'u'],
    [662, 324, 379, 565, 672, 'u'], [675, 334, 379, 384, 410, 'd'], [688, 262, 384, 388, 412, 'd'],
    [700, 367, 381, 388, 447, 'u'], [713, 330, 381, 407, 425, 'd'], [726, 369, 406, 479, 514, 'd'],
    [739, 346, 393, 479, 535, 'u'], [752, 362, 388, 393, 516, 'u'], [764, 301, 388, 393, 432, 'd'],
    [777, 364, 393, 424, 466, 'd'], [790, 396, 405, 424, 462, 'u'], [803, 389, 405, 429, 484, 'd'],
    [816, 344, 361, 429, 447, 'u'], [828, 360, 361, 456, 461, 'd'], [841, 417, 444, 456, 496, 'u'],
    [854, 411, 444, 452, 467, 'd'], [867, 421, 442, 452, 461, 'u'], [879, 387, 399, 443, 468, 'u'],
    [892, 391, 399, 414, 454, 'd'], [905, 324, 402, 414, 466, 'u'], [918, 386, 402, 486, 511, 'd'],
    [931, 428, 456, 486, 496, 'u'], [943, 444, 453, 457, 496, 'u'], [956, 448, 453, 507, 565, 'd'],
    [969, 458, 497, 507, 575, 'u'], [982, 494, 497, 607, 620, 'd'], [994, 557, 589, 607, 641, 'u'],
    [1007, 530, 589, 708, 728, 'd'], [1020, 656, 671, 709, 733, 'u'], [1033, 658, 671, 686, 749, 'd'],
    [1046, 572, 589, 686, 738, 'u'], [1058, 485, 574, 590, 607, 'u'], [1071, 521, 574, 588, 593, 'd'],
    [1084, 569, 588, 613, 679, 'd'], [1097, 559, 591, 613, 627, 'u'], [1110, 497, 512, 592, 592, 'u'],
    [1122, 469, 512, 533, 556, 'd'], [1135, 500, 533, 537, 551, 'd'], [1148, 530, 536, 617, 641, 'd'],
    [1161, 525, 543, 617, 621, 'u'], [1173, 525, 533, 544, 547, 'u']
];

const pivots = [
    ['R4 - Daily (1,808.8)', 215], ['R3 - Daily (1,767.54)', 298], ['R2 - Daily (1,726.29)', 383],
    ['R1 - Daily (1,672.22)', 497], ['P - Daily (1,630.97)', 587], ['S1 -Daily (1,576.9)', 708],
    ['S2 - Daily (1,535.65)', 804], ['S3 - Daily (1,481.58)', 933]
];

const prices = [
    ['1800.00', 232], ['1780.00', 272], ['1760.00', 313], ['1740.00', 354], ['1720.00', 396],
    ['1700.00', 438], ['1680.00', 480], ['1660.00', 522], ['1640.00', 567], ['1620.00', 611],
    ['1585.00', 690], ['1570.00', 724], ['1554.00', 761], ['1538.00', 798], ['1522.00', 835],
    ['1508.00', 869], ['1494.00', 902], ['1481.00', 934]
];

const times = [
    ['22', 151], ['12:30', 266], ['25', 381], ['27', 534], ['29', 688], ['12:30', 803],
    ['Aug', 918], ['3', 1071], ['12:30', 1340], ['8', 1455], ['10', 1608], ['12', 1761]
];

function line(x1, y1, x2, y2, color, width, dash) {
    return `<line x1="${x1}" y1="${y1}" x2="${x2}" y2="${y2}" stroke="${color}" stroke-width="${width}" stroke-dasharray="${dash || 'none'}"/>`;
}
function rect(x, y, w, h, fill, stroke, width) {
    return `<rect x="${x}" y="${y}" width="${w}" height="${h}" fill="${fill}" stroke="${stroke || 'none'}" stroke-width="${width || 1}"/>`;
}
function text(label, x, y, cls) {
    return `<text x="${x}" y="${y}" class="${cls || ''}">${label}</text>`;
}

let out = '<clipPath id="pane"><rect x="56" y="172" width="1746" height="785"/></clipPath><g clip-path="url(#pane)">';

// grid
times.forEach(t => out += line(t[1] + 0.5, 172, t[1] + 0.5, 957, 'rgba(0,0,0,0.015)', 1));
prices.forEach(p => out += line(56, p[1] + 0.5, 1802, p[1] + 0.5, 'rgba(0,0,0,0.015)', 1));

// zones
out += rect(56, 384, 1746, 137, 'rgba(240,90,150,0.15)');
out += line(56, 384, 1802, 384, '#a01828', 2);
out += rect(54, 469, 1338, 64, 'rgba(30,170,145,0.36)', '#0f5a4e', 2);
out += line(56, 521, 1802, 521, '#66152f', 2);
out += rect(407, 833, 972, 57, 'rgba(120,120,120,0.25)', '#000', 2);
out += rect(407, 866, 26, 12, 'rgba(120,120,120,0.25)', '#000', 2);

// levels
out += line(56, 656, 1802, 656, '#15178c', 2);
out += line(931, 913, 1802, 913, '#000', 2);
pivots.forEach(p => {
    out += text(p[0], 1090, p[1] - 1, 'pivot');
});
out += text('P - Weekly (1,606.36)', 860, 641, 'pivot');
out += text('P - Monthly (1,489.74)', 860, 912, 'pivot');

out += line(573.5, 949, 573.5, 957, '#000', 1);
candles.forEach(([x, high, top, bottom, low, dir]) => {
    out += line(x + 0.5, high, x + 0.5, low, '#000', 1);
    out += rect(x - 3.5, top + 0.5, 8, Math.max(bottom - top - 1, 0), dir === 'u' ? '#22a391' : '#f0155c', dir === 'u' ? '#06352e' : '#570822');
});
out += line(96, 917.5, 105, 917.5, '#000', 1);

pivots.forEach(p => out += line(1161, p[1], 1237, p[1], '#1b35a5', 2));
out += line(931, 642, 1467, 642, '#1e7d25', 2);

// drawings
out += '<g class="trend">';
out += line(56, 536, 933, 172);
out += line(688, 263, 1237, 531);
out += line(841, 957, 1604, 172);
out += line(247, 957, 1802, 564);
out += line(662, 671, 1186, 675);
out += '</g>';

out += line(56, 533.5, 1802, 533.5, '#d9a62e', 1, '1 2');
out += line(56, 586.5, 1802, 586.5, '#6d6d6d', 1, '5 5');
out += line(1250.5, 172, 1250.5, 957, '#6d6d6d', 1, '5 5');
out += '<circle cx="1250" cy="586" r="29.500" fill="none" stroke="#62ee5e" stroke-width="5"/>';
out += '<path d="M1249 588q2-2 4 0v8q1-2 3 0 2-1 3 1 3-1 3 2v6q-1 4-5 4-4 1-6-3l-5-8q1-2 3-1z" fill="#fff" stroke="#111"/>';
out += '</g>';

// logo
out += '<circle cx="79" cy="935" r="16" fill="#fff" stroke="#c5c5c9"/><path d="M69 930h9v10h-4v-6h-5zM84 930h6l-4 10h-5z" fill="#000"/><circle cx="80.500" cy="932" r="2" fill="#000"/>';

// axes
out += line(1802.5, 172, 1802.5, 985, '#b9bac0', 1);
out += line(56, 957.5, 1870, 957.5, '#b0b1b6', 1);
prices.forEach(p => out += text(p[0], 1833, p[1]));
times.forEach(t => out += text(t[0], t[1], 970));
out += rect(1802, 525, 63, 31, '#eeb422');
out += text('1655.58', 1833, 533) + text('03:12:32', 1836, 547);
out += rect(1780, 576, 21, 21, '#08090f') + rect(1802, 576, 59, 21, '#08090f');
out += '<circle cx="1790.500" cy="586.500" r="7.500" fill="none" stroke="#fff"/><path d="M1786 586.500h9M1790.500 582v9" stroke="#fff"/>';
out += text('1631.51', 1833, 586, 'light');
out += rect(1802, 648, 59, 17, '#1d4ff0') + text('1600.00', 1833, 656, 'light');
out += rect(1195, 957, 112, 24, '#08090f') + text("05 Aug '22 &#160; 08:30", 1251, 971, 'light');
out += '<circle cx="1836" cy="971" r="5" fill="none" stroke="#131722"/><path d="M1836 963v3M1836 976v3M1828 971h3M1841 971h3M1830 965l2 2M1840 975l2 2M1842 965l-2 2M1832 975l-2 2" stroke="#131722"/>';

document.getElementById('chart').innerHTML = out;
```
